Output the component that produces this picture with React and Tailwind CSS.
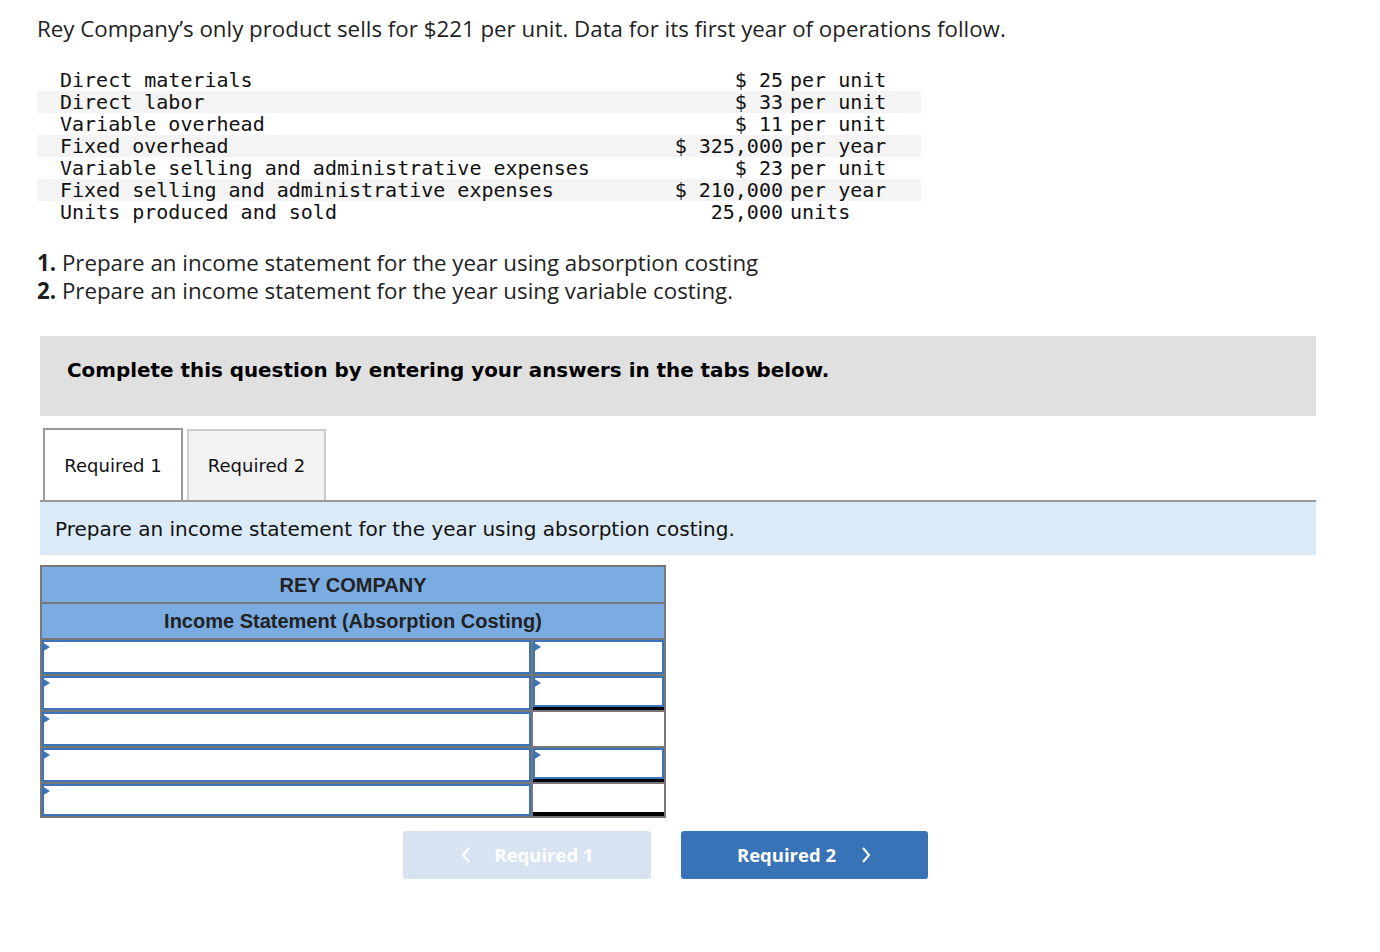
const rows = [
  ["Direct materials", "$ 25", "per unit"],
  ["Direct labor", "$ 33", "per unit"],
  ["Variable overhead", "$ 11", "per unit"],
  ["Fixed overhead", "$ 325,000", "per year"],
  ["Variable selling and administrative expenses", "$ 23", "per unit"],
  ["Fixed selling and administrative expenses", "$ 210,000", "per year"],
  ["Units produced and sold", "25,000", "units"],
];

// right cell: input? and underline style
const lines = [
  { right: true, under: "" },
  { right: true, under: "single" },
  { right: false, under: "" },
  { right: true, under: "single" },
  { right: false, under: "double" },
];

function Flag() {
  return (
    <span className="absolute left-0 top-[2px] w-0 h-0 border-y-[5px] border-y-transparent border-l-[8px] border-l-[#3b74b8]" />
  );
}

function Cell({ input, under, last }) {
  const h = last ? "h-[32px]" : "h-[34px]";
  const underCls =
    under === "single"
      ? "border-b-[3px] border-b-black"
      : under === "double"
      ? "border-b-[4px] border-b-black"
      : "";
  if (!input) {
    return <div className={`${h} bg-white ${underCls}`} />;
  }
  return (
    <div className={`${h} bg-white relative ${underCls}`}>
      <div className="h-full border-2 border-[#3b74b8] bg-white" />
      <Flag />
    </div>
  );
}

export default function App() {
  return (
    <div className="min-h-screen bg-white text-[#1f1f1f] pl-[37px] pt-[15px] pb-10">
      <p className="font-['Open_Sans',sans-serif] text-[22.3px] leading-[28px]">
        Rey Company’s only product sells for $221 per unit. Data for its first year of operations follow.
      </p>

      <div className="mt-[26px] w-[884px] font-['DejaVu_Sans_Mono',monospace] text-[20px] leading-[22px] text-[#111]">
        {rows.map((r, i) => (
          <div
            key={r[0]}
            className={`flex ${i % 2 === 1 ? "bg-[#f4f4f4]" : "bg-white"}`}
          >
            <div className="flex-1 pl-[23px] whitespace-pre">{r[0]}</div>
            <div className="w-[140px] text-right whitespace-pre">{r[1]}</div>
            <div className="w-[138px] pl-[7px] whitespace-pre">{r[2]}</div>
          </div>
        ))}
      </div>

      <div className="mt-[26px] font-['Open_Sans',sans-serif] text-[22.3px] leading-[28px]">
        <p>
          <span className="font-bold">1.</span> Prepare an income statement for the year using absorption costing
        </p>
        <p>
          <span className="font-bold">2.</span> Prepare an income statement for the year using variable costing.
        </p>
      </div>

      <div className="ml-[3px] w-[1276px]">
        <div className="mt-[31px] h-[80px] bg-[#e0e0e0] pl-[27px] pt-[20px] font-['DejaVu_Sans',sans-serif] font-bold text-[19.9px] text-black">
          Complete this question by entering your answers in the tabs below.
        </div>

        <div className="mt-[12px] flex items-end gap-[4px] pl-[3px] border-b-2 border-[#9a9a9a] font-['DejaVu_Sans',sans-serif] text-[18px] text-[#111]">
          <div className="w-[140px] h-[72px] flex items-center justify-center bg-white border-2 border-b-0 border-[#999]">
            Required 1
          </div>
          <div className="w-[139px] h-[71px] flex items-center justify-center bg-[#f2f2f2] border-2 border-b-0 border-[#cccccc]">
            Required 2
          </div>
        </div>

        <div className="h-[53px] bg-[#dbeaf7] pl-[15px] flex items-center font-['DejaVu_Sans',sans-serif] text-[20px] text-[#111]">
          Prepare an income statement for the year using absorption costing.
        </div>

        <div className="mt-[10px] w-[626px] bg-[#777] p-[2px] font-['Liberation_Sans',Arial,sans-serif]">
          <div className="h-[35px] bg-[#7aace2] flex items-center justify-center font-bold text-[20px] text-[#222]">
            REY COMPANY
          </div>
          <div className="mt-[2px] h-[34px] bg-[#7aace2] flex items-center justify-center font-bold text-[20px] text-[#222]">
            Income Statement (Absorption Costing)
          </div>
          <div className="mt-[2px] grid grid-cols-[489px_1fr] gap-x-[2px] gap-y-[2px]">
            {lines.map((l, i) => (
              <div key={i} className="contents">
                <Cell input under="" last={i === lines.length - 1} />
                <Cell input={l.right} under={l.under} last={i === lines.length - 1} />
              </div>
            ))}
          </div>
        </div>

        <div className="mt-[13px] ml-[363px] flex gap-[30px] font-['Open_Sans',sans-serif] font-bold text-[18.5px] text-white">
          <div className="w-[248px] h-[48px] rounded-[3px] bg-[#d8e3f1] flex items-center justify-center gap-[22px]">
            <svg width="12" height="18" viewBox="0 0 12 18" fill="none" stroke="white" strokeWidth="2">
              <path d="M9 2 L3 9 L9 16" />
            </svg>
            <span>Required 1</span>
          </div>
          <div className="w-[247px] h-[48px] rounded-[3px] bg-[#3873b7] flex items-center justify-center gap-[24px]">
            <span>Required 2</span>
            <svg width="12" height="18" viewBox="0 0 12 18" fill="none" stroke="white" strokeWidth="2">
              <path d="M3 2 L9 9 L3 16" />
            </svg>
          </div>
        </div>
      </div>
    </div>
  );
}
